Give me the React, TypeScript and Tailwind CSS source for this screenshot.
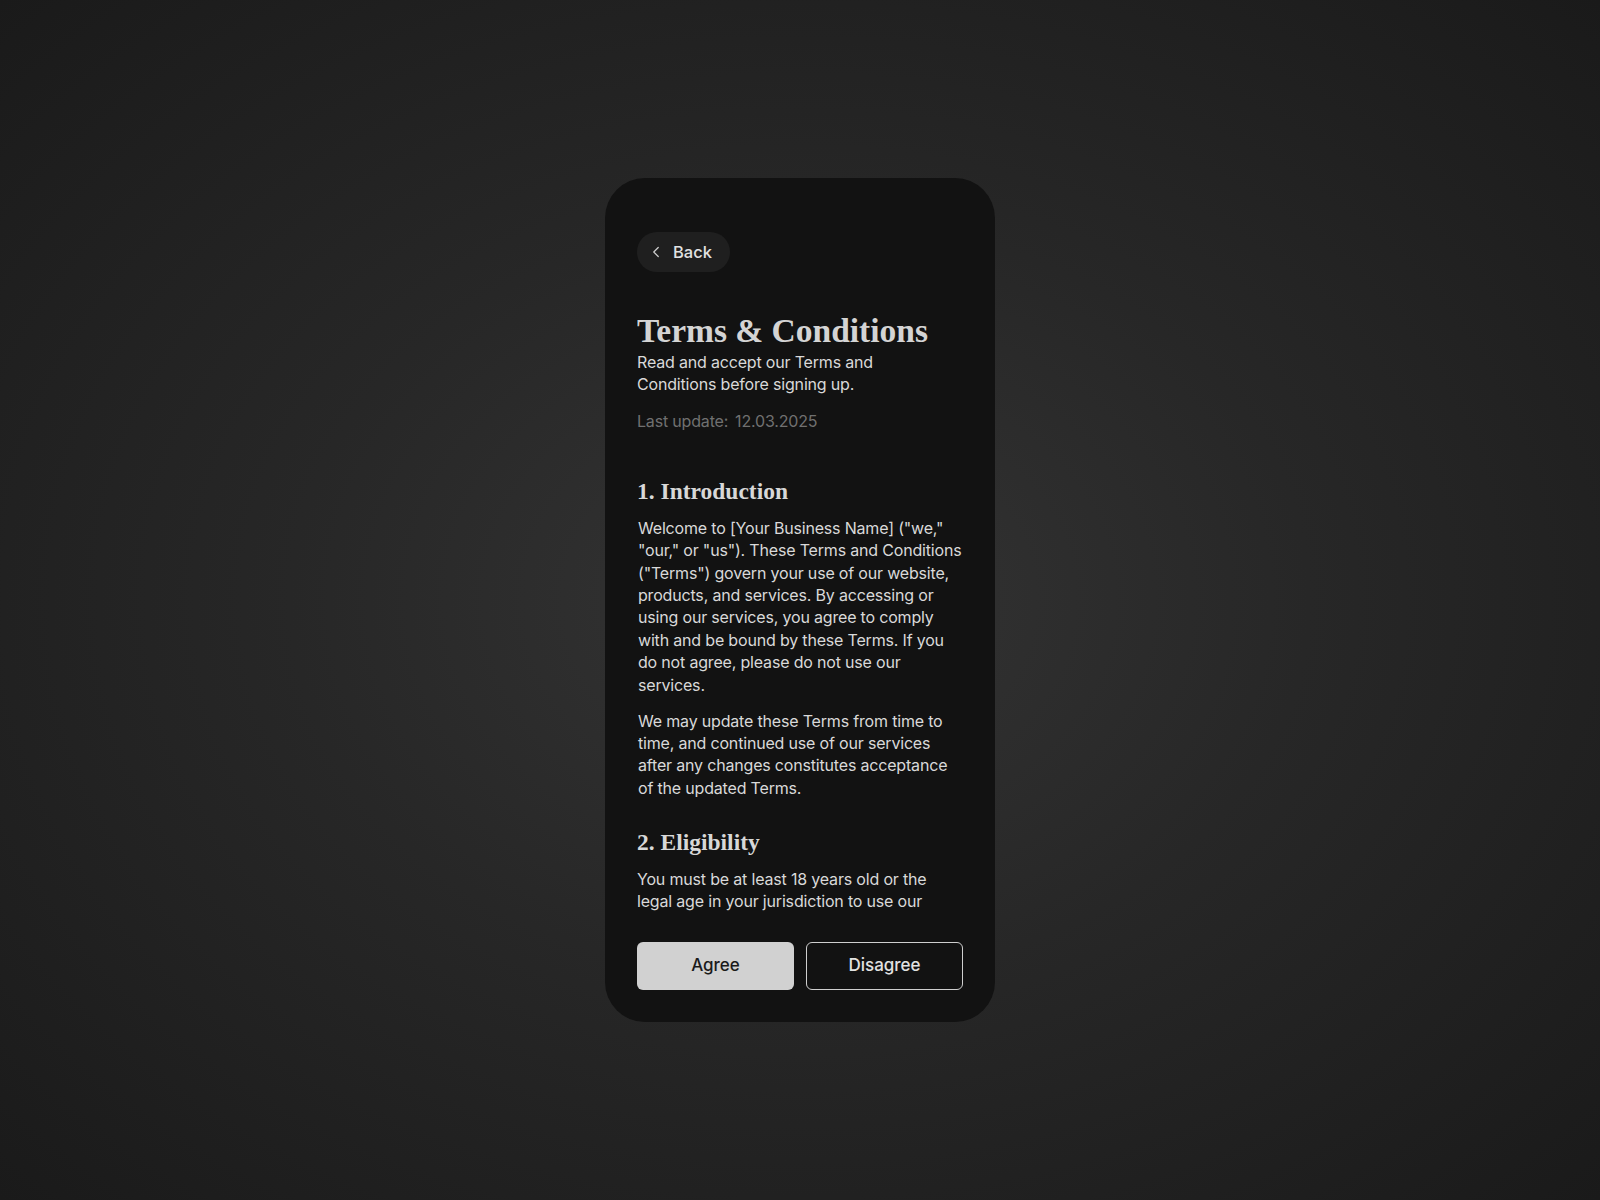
import React from "react";
import { ChevronLeft } from "lucide-react";

const sans = "font-['Inter','Noto_Sans',sans-serif]";
const serif = "font-['Liberation_Serif','DejaVu_Serif',serif]";

export default function App() {
  return (
    <div className="w-full min-h-screen h-[1200px] flex items-center justify-center bg-[radial-gradient(ellipse_at_center,#343434_0%,#272727_45%,#1a1a1a_100%)]">
      <div className={`w-[390px] h-[844px] rounded-[40px] bg-[#121212] flex flex-col px-8 ${sans} tracking-[-0.18px]`}>
        <div className="pt-[54px]">
          <button className="h-10 w-[93px] rounded-full bg-[#1f1f1f] flex items-center gap-[8px] pl-[10px] text-[#e2e2e2] text-[16.5px] font-medium tracking-normal">
            <ChevronLeft size={18} strokeWidth={1.6} className="text-[#d0d0d0]" />
            <span>Back</span>
          </button>
        </div>
        <div className="flex-1 overflow-hidden">
          <h1 className={`${serif} mt-[39px] text-[33.5px] leading-[40px] font-bold text-[#d4d4d4] tracking-normal`}>
            Terms &amp; Conditions
          </h1>
          <p className="text-[16px] leading-[22.4px] text-[#d9d9d9]">
            Read and accept our Terms and
            <br />
            Conditions before signing up.
          </p>
          <p className="mt-[14px] text-[16px] leading-[22.4px] text-[#707070] flex gap-[7px]">
            <span>Last update:</span>
            <span>12.03.2025</span>
          </p>

          <h2 className={`${serif} mt-[44px] text-[23.5px] leading-[30px] font-bold text-[#d8d8d8] tracking-normal`}>
            1. Introduction
          </h2>
          <p className="mt-[10.5px] pl-px text-[16px] leading-[22.4px] text-[#d9d9d9]">
            Welcome to [Your Business Name] ("we," "our," or "us"). These Terms and Conditions ("Terms") govern your use of our website, products, and services. By accessing or using our services, you agree to comply with and be bound by these Terms. If you do not agree, please do not use our services.
          </p>
          <p className="mt-[13.7px] pl-px text-[16px] leading-[22.4px] text-[#d9d9d9]">
            We may update these Terms from time to time, and continued use of our services after any changes constitutes acceptance of the updated Terms.
          </p>

          <h2 className={`${serif} mt-[28px] text-[23.5px] leading-[30px] font-bold text-[#d8d8d8] tracking-normal`}>
            2. Eligibility
          </h2>
          <p className="mt-[10.6px] text-[16px] leading-[22.4px] text-[#d9d9d9]">
            You must be at least 18 years old or the legal age in your jurisdiction to use our
          </p>
        </div>
        <div className="pt-[30px] pb-8 grid grid-cols-2 gap-3 tracking-normal">
          <button className="h-12 rounded-[6px] bg-[#d1d1d1] text-[#1a1a1a] text-[17px] font-medium">
            Agree
          </button>
          <button className="h-12 rounded-[6px] border border-[#cfcfcf] text-[#e2e2e2] text-[17px] font-medium">
            Disagree
          </button>
        </div>
      </div>
    </div>
  );
}
